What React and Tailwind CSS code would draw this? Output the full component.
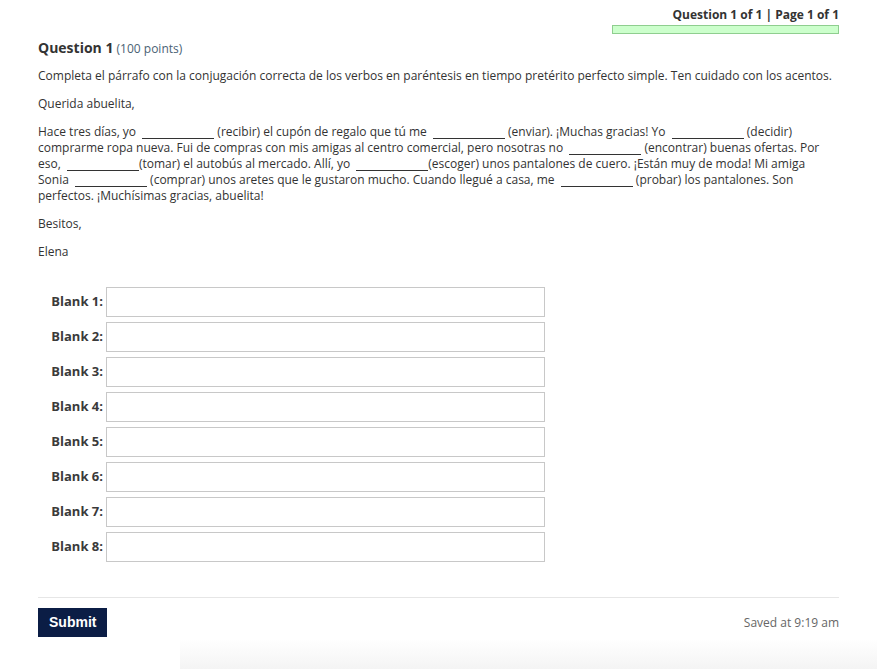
import React from 'react';

const font = { fontFamily: '"Open Sans", "Liberation Sans", sans-serif' };

function Blank({ after = true }) {
  return (
    <>
      {' '}
      <span className="inline-block w-[72px] h-[12px] border-b border-[#333] align-[-3px] ml-[3px]"></span>
      {after ? ' ' : ''}
    </>
  );
}

export default function App() {
  const blanks = [1, 2, 3, 4, 5, 6, 7, 8];

  return (
    <div className="w-[877px] h-[669px] bg-white text-[#333] overflow-hidden relative" style={font}>
      <div className="px-[38px] pt-[5px]">
        {/* Header */}
        <div className="flex flex-col items-end">
          <div className="mt-[2px] text-[12px] font-bold leading-[16px] text-[#333]">Question 1 of 1 | Page 1 of 1</div>
          <div className="mt-[2px] w-[227px] h-[9px] bg-[#ccffcc] border border-[#8fce8f]"></div>
        </div>

        {/* Question */}
        <div className="mt-[4px] leading-[18px]">
          <span className="text-[14px] font-bold">Question 1</span>
          <span className="text-[12px] text-[#4a6274]"> (100 points)</span>
        </div>

        <div className="mt-[10px] text-[12px] leading-[16px] space-y-[12px]">
          <p>Completa el párrafo con la conjugación correcta de los verbos en paréntesis en tiempo pretérito perfecto simple. Ten cuidado con los acentos.</p>
          <p>Querida abuelita,</p>
          <p className="max-w-[790px]">
            Hace tres días, yo<Blank />(recibir) el cupón de regalo que tú me<Blank />(enviar). ¡Muchas gracias! Yo<Blank />(decidir) comprarme ropa nueva. Fui de compras con mis amigas al centro comercial, pero nosotras no<Blank />(encontrar) buenas ofertas. Por eso,<Blank after={false} />(tomar) el autobús al mercado. Allí, yo<Blank after={false} />(escoger) unos pantalones de cuero. ¡Están muy de moda! Mi amiga Sonia<Blank />(comprar) unos aretes que le gustaron mucho. Cuando llegué a casa, me<Blank />(probar) los pantalones. Son perfectos. ¡Muchísimas gracias, abuelita!
          </p>
          <p>Besitos,</p>
          <p>Elena</p>
        </div>

        {/* Blanks */}
        <div className="mt-[27px] flex flex-col gap-[5px]">
          {blanks.map(n => (
            <div key={n} className="flex items-center">
              <label className="w-[68px] pr-[3px] text-right text-[13px] font-bold text-[#3a3a3a]">Blank {n}:</label>
              <input className="w-[439px] h-[30px] border border-[#c8c8c8] bg-white outline-none px-2" />
            </div>
          ))}
        </div>

        {/* Footer */}
        <div className="mt-[35px] border-t border-[#e6e6e6] pt-[10px] flex items-center justify-between">
          <button className="h-[29px] px-[11px] bg-[#0b1d45] text-white text-[14px] font-bold" style={{ fontFamily: '"Liberation Sans", Arial, sans-serif' }}>
            Submit
          </button>
          <span className="text-[12px] text-[#666]">Saved at 9:19 am</span>
        </div>
      </div>
      <div className="absolute left-[180px] right-0 bottom-0 h-[30px] bg-gradient-to-b from-white to-[#f4f4f4]"></div>
    </div>
  );
}
